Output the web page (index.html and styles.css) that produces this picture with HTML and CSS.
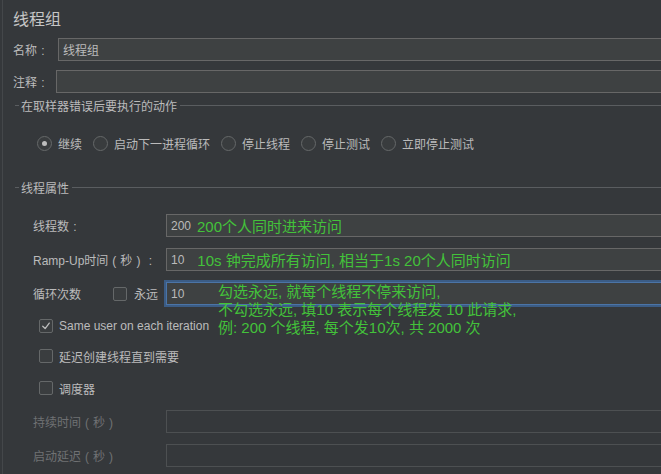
FILE: index.html
```html
<!DOCTYPE html>
<html lang="zh">
<head>
<meta charset="utf-8">
<link rel="stylesheet" href="styles.css">
</head>
<body>
<div class="panel">
  <div class="title">线程组</div>

  <div class="row row-name">
    <span class="lbl lbl-name">名称<span class="fw">:</span></span>
    <div class="field">线程组</div>
  </div>
  <div class="row row-comment">
    <span class="lbl lbl-comment">注释<span class="fw">:</span></span>
    <div class="field"></div>
  </div>

  <div class="legend legend-1">
    <span class="lline"></span>
    <span class="ltext">在取样器错误后要执行的动作</span>
    <span class="rline"></span>
  </div>

  <div class="radios">
    <label class="radio"><span class="circle on"></span>继续</label>
    <label class="radio"><span class="circle"></span>启动下一进程循环</label>
    <label class="radio"><span class="circle"></span>停止线程</label>
    <label class="radio"><span class="circle"></span>停止测试</label>
    <label class="radio"><span class="circle"></span>立即停止测试</label>
  </div>

  <div class="legend legend-2">
    <span class="lline"></span>
    <span class="ltext">线程属性</span>
    <span class="rline"></span>
  </div>

  <div class="prow prow-threads">
    <span class="plbl">线程数<span class="fw">:</span></span>
    <div class="field"><span class="val">200</span><span class="note note-threads">200个人同时进来访问</span></div>
  </div>
  <div class="prow prow-ramp">
    <span class="plbl">Ramp-Up时间<span class="fw">(</span>秒<span class="fw">)</span><span class="fw">:</span></span>
    <div class="field"><span class="val">10</span><span class="note note-ramp">10s 钟完成所有访问, 相当于1s 20个人同时访问</span></div>
  </div>
  <div class="prow prow-loop">
    <span class="plbl plbl-loop">循环次数</span>
    <span class="cb"></span>
    <span class="forever">永远</span>
    <div class="field focused"><span class="val">10</span></div>
    <div class="note note-loop">勾选永远, 就每个线程不停来访问,<br>不勾选永远, 填10 表示每个线程发 10 此请求,<br>例: 200 个线程, 每个发10次, 共 2000 次</div>
  </div>

  <div class="crow crow-same">
    <span class="cb checked"><svg viewBox="0 0 14 14" width="14" height="14"><path d="M3.2 7.2 L6 10 L10.8 3.6" fill="none" stroke="#bdbdbd" stroke-width="1.5" stroke-linecap="round" stroke-linejoin="round"/></svg></span>
    <span class="ctext">Same user on each iteration</span>
  </div>
  <div class="crow crow-delay">
    <span class="cb"></span>
    <span class="ctext">延迟创建线程直到需要</span>
  </div>
  <div class="crow crow-sched">
    <span class="cb"></span>
    <span class="ctext">调度器</span>
  </div>

  <div class="prow prow-dur disabled">
    <span class="plbl">持续时间<span class="fw">(</span>秒<span class="fw">)</span></span>
    <div class="field"></div>
  </div>
  <div class="prow prow-delay disabled">
    <span class="plbl">启动延迟<span class="fw">(</span>秒<span class="fw">)</span></span>
    <div class="field"></div>
  </div>
</div>
</body>
</html>
```

FILE: styles.css
```css
html, body {
  margin: 0;
  padding: 0;
  background: #35383b;
  overflow: hidden;
}
body {
  width: 661px;
  height: 474px;
  font-family: "Liberation Sans", "Noto Sans CJK SC", sans-serif;
  font-size: 12px;
  color: #bbbbbb;
}
.panel {
  margin-left: 2px;
  border-left: 1px solid #44474a;
  padding: 8px 0 0 10px;
  height: 466px;
  overflow: hidden;
}
.title {
  height: 24px;
  line-height: 24px;
  font-size: 16px;
  color: #c6c6c6;
  margin-bottom: 6px;
}
.fw {
  display: inline-block;
  width: 12px;
  text-align: center;
}
.row {
  display: flex;
  align-items: center;
  height: 23px;
}
.row-comment { margin-top: 9px; }
.lbl { white-space: nowrap; }
.lbl-name { width: 45px; flex: none; }
.lbl-comment { width: 43px; flex: none; }
.field {
  box-sizing: border-box;
  height: 23px;
  flex: 1;
  min-width: 0;
  background: #3e4142;
  border: 1px solid #676767;
  border-right: 0;
  display: flex;
  align-items: center;
  padding-left: 4px;
  color: #bbbbbb;
  white-space: nowrap;
}
.legend {
  display: flex;
  align-items: center;
  height: 16px;
  padding-left: 2px;
}
.legend-1 { margin-top: 4px; }
.legend-2 { margin-top: 28px; }
.lline {
  width: 4px;
  height: 1px;
  background: #5a5d60;
  flex: none;
}
.ltext { margin: 0 3px 0 2px; white-space: nowrap; }
.rline {
  flex: 1;
  height: 1px;
  background: #5a5d60;
}
.radios {
  display: flex;
  align-items: center;
  height: 16px;
  margin-top: 22px;
  padding-left: 24px;
  gap: 11px;
}
.radio {
  display: flex;
  align-items: center;
  white-space: nowrap;
}
.circle {
  box-sizing: border-box;
  width: 15px;
  height: 15px;
  border-radius: 50%;
  border: 1px solid #656869;
  background: #393c3e;
  margin-right: 6px;
  display: flex;
  align-items: center;
  justify-content: center;
}
.circle.on::after {
  content: "";
  width: 5px;
  height: 5px;
  border-radius: 50%;
  background: #bdbdbd;
}
.prow {
  position: relative;
  display: flex;
  align-items: center;
  height: 23px;
  padding-left: 20px;
}
.plbl {
  width: 133px;
  flex: none;
  white-space: nowrap;
}
.prow-threads { margin-top: 19px; }
.prow-ramp { margin-top: 11px; }
.prow-loop { margin-top: 11px; }
.plbl-loop { width: 80px; }
.cb {
  box-sizing: border-box;
  width: 14px;
  height: 14px;
  border: 1px solid #656869;
  border-radius: 2px;
  background: #3a3d3f;
  flex: none;
  display: flex;
  align-items: center;
  justify-content: center;
}
.cb svg { display: block; }
.forever {
  margin-left: 7px;
  width: 32px;
  flex: none;
}
.field.focused {
  border-color: #4b74a6;
  box-shadow: 0 0 0 2px #3b5c85;
}
.note {
  color: #43c23a;
  font-size: 15px;
  white-space: nowrap;
}
.note-threads { margin-left: 6px; }
.note-ramp { margin-left: 13px; }
.note-loop {
  position: absolute;
  left: 205px;
  top: 1px;
  line-height: 18px;
}
.crow {
  display: flex;
  align-items: center;
  height: 14px;
  padding-left: 26px;
}
.crow-same { margin-top: 14px; }
.crow-delay { margin-top: 16px; }
.crow-sched { margin-top: 18px; }
.ctext {
  margin-left: 6px;
  white-space: nowrap;
}
.prow-dur { margin-top: 15px; }
.prow-delay { margin-top: 11px; }
.disabled .plbl { color: #6f7173; }
.disabled .field {
  background: transparent;
  border-color: #4d5052;
}
```
